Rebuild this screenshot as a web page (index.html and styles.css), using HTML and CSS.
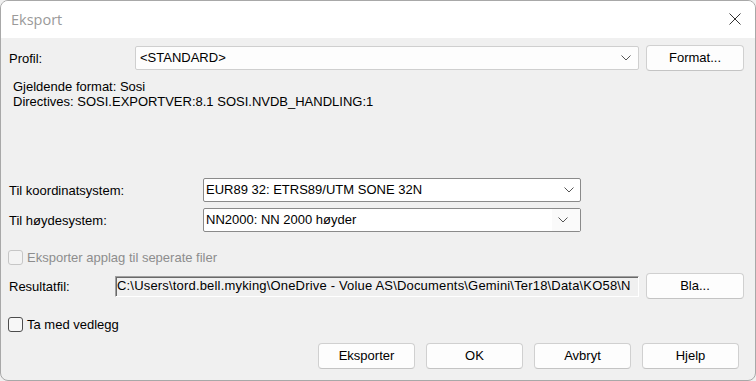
FILE: index.html
```html
<!DOCTYPE html>
<html lang="no">

<head>
  <meta charset="UTF-8">
  <meta name="viewport" content="width=device-width, initial-scale=1.0">
  <title>Eksport</title>
  <link rel="stylesheet" href="styles.css">
</head>

<body>
  <div class="window">
    <div class="titlebar">
      <div class="title">Eksport</div>
      <svg class="close" width="12" height="12" viewBox="0 0 12 12">
        <path d="M0.5 0.5 L11.5 11.5 M11.5 0.5 L0.5 11.5" stroke="#333" stroke-width="1" fill="none" />
      </svg>
    </div>

    <div class="content">
      <div class="row row-profil">
        <div class="label label-profil">Profil:</div>
        <div class="combo combo-light combo-profil">
          <span class="combo-text">&lt;STANDARD&gt;</span>
          <svg class="chevron" width="10" height="6" viewBox="0 0 10 6">
            <polyline points="0.5,0.5 5,5 9.5,0.5" stroke="#555" stroke-width="1" fill="none" />
          </svg>
        </div>
        <button class="button btn-side">Format...</button>
      </div>

      <div class="info">
        <div>Gjeldende format: Sosi</div>
        <div>Directives: SOSI.EXPORTVER:8.1 SOSI.NVDB_HANDLING:1</div>
      </div>

      <div class="row row-koord">
        <div class="label label-wide">Til koordinatsystem:</div>
        <div class="combo combo-system">
          <span class="combo-text">EUR89 32: ETRS89/UTM SONE 32N</span>
          <svg class="chevron" width="10" height="6" viewBox="0 0 10 6">
            <polyline points="0.5,0.5 5,5 9.5,0.5" stroke="#555" stroke-width="1" fill="none" />
          </svg>
        </div>
      </div>

      <div class="row row-hoyde">
        <div class="label label-wide">Til høydesystem:</div>
        <div class="combo combo-system">
          <span class="combo-text">NN2000: NN 2000 høyder</span>
          <span class="combo-arrow">
            <svg class="chevron" width="10" height="6" viewBox="0 0 10 6">
              <polyline points="0.5,0.5 5,5 9.5,0.5" stroke="#555" stroke-width="1" fill="none" />
            </svg>
          </span>
        </div>
      </div>

      <div class="row row-check row-applag">
        <span class="checkbox checkbox-disabled"></span>
        <span class="check-text disabled">Eksporter applag til seperate filer</span>
      </div>

      <div class="row row-result">
        <div class="label label-result">Resultatfil:</div>
        <div class="field"><span class="field-text">C:\Users\tord.bell.myking\OneDrive - Volue AS\Documents\Gemini\Ter18\Data\KO58\N</span></div>
        <button class="button btn-side">Bla...</button>
      </div>

      <div class="row row-check row-vedlegg">
        <span class="checkbox"></span>
        <span class="check-text">Ta med vedlegg</span>
      </div>

      <div class="row row-actions">
        <button class="button btn-action">Eksporter</button>
        <button class="button btn-action">OK</button>
        <button class="button btn-action">Avbryt</button>
        <button class="button btn-action">Hjelp</button>
      </div>
    </div>
  </div>
</body>

</html>
```

FILE: styles.css
```css
html,
body {
  margin: 0;
  padding: 0;
}

body {
  width: 756px;
  height: 381px;
  background: #f0f0f0;
  font-family: "Liberation Sans", Arial, sans-serif;
  font-size: 13px;
  color: #000;
  overflow: hidden;
}

.window {
  box-sizing: border-box;
  width: 756px;
  height: 381px;
  border: 1px solid #a8a8a8;
  border-radius: 8px;
  background: #f0f0f0;
  overflow: hidden;
}

.titlebar {
  display: flex;
  align-items: center;
  justify-content: space-between;
  height: 37px;
  padding: 0 14px 0 10px;
  background: #ffffff;
}

.title {
  font-family: "Open Sans", "Noto Sans", sans-serif;
  font-size: 14.5px;
  color: #9a9a9a;
  padding-bottom: 1px;
}

.close {
  display: block;
  margin-top: -1px;
}

.content {
  padding: 0 11px 0 8px;
}

.row {
  display: flex;
  align-items: center;
}

.label {
  flex: none;
  white-space: nowrap;
}

.row-profil {
  height: 26px;
  margin-top: 7px;
}

.label-profil {
  width: 126px;
}

.label-wide {
  width: 194px;
}

.label-result {
  width: 106px;
}

.combo {
  box-sizing: border-box;
  display: flex;
  align-items: center;
  justify-content: space-between;
  background: #ffffff;
  border-radius: 2px;
}

.combo-light {
  border: 1px solid #cfcfcf;
  background: #fdfdfd;
}

.combo-profil {
  width: 504px;
  height: 24px;
  padding: 0 7px 0 4px;
}

.combo-system {
  width: 378px;
  height: 24px;
  border: 1px solid #8a8a8a;
  padding: 0 6px 0 2px;
}

.combo-text {
  white-space: nowrap;
  padding-bottom: 1px;
}

.chevron {
  display: block;
}

.combo-arrow {
  display: flex;
  align-items: center;
  justify-content: center;
  width: 22px;
  height: 22px;
  margin-right: -6px;
  padding-right: 6px;
  background: #fafafa;
}

.button {
  box-sizing: border-box;
  flex: none;
  height: 26px;
  border: 1px solid #d0d0d0;
  border-bottom-color: #c4c4c4;
  border-radius: 4px;
  background: #fdfdfd;
  font-family: "Liberation Sans", Arial, sans-serif;
  font-size: 13px;
  color: #000;
  padding: 0 0 1px;
}

.btn-side {
  width: 98px;
  margin-left: auto;
}

.info {
  margin-top: 8px;
  padding-left: 4px;
  line-height: 15px;
}

.row-koord {
  height: 24px;
  margin-top: 69px;
}

.row-hoyde {
  height: 24px;
  margin-top: 6px;
}

.row-check {
  height: 16px;
}

.row-applag {
  margin-top: 17px;
}

.checkbox {
  box-sizing: border-box;
  flex: none;
  width: 15px;
  height: 15px;
  margin-left: -1px;
  border: 1px solid #4d4d4d;
  border-radius: 3px;
  background: #f7f7f7;
}

.checkbox-disabled {
  border-color: #c6c6c6;
  background: #f3f3f3;
}

.check-text {
  margin-left: 4px;
  white-space: nowrap;
}

.disabled {
  color: #8d8d8d;
}

.row-result {
  height: 26px;
  margin-top: 8px;
}

.field {
  box-sizing: border-box;
  width: 524px;
  height: 21px;
  line-height: 17px;
  padding-left: 1px;
  border: 1px solid;
  border-color: #a0a0a0 #ffffff #ffffff #a0a0a0;
  box-shadow: inset 1px 1px 0 #696969;
  background: #f0f0f0;
  white-space: nowrap;
  overflow: hidden;
}

.field-text {
  letter-spacing: 0.18px;
}

.row-vedlegg {
  margin-top: 17px;
}

.row-actions {
  justify-content: flex-end;
  gap: 11px;
  height: 26px;
  margin-top: 11px;
  padding-right: 5px;
}

.btn-action {
  width: 97px;
}
```
